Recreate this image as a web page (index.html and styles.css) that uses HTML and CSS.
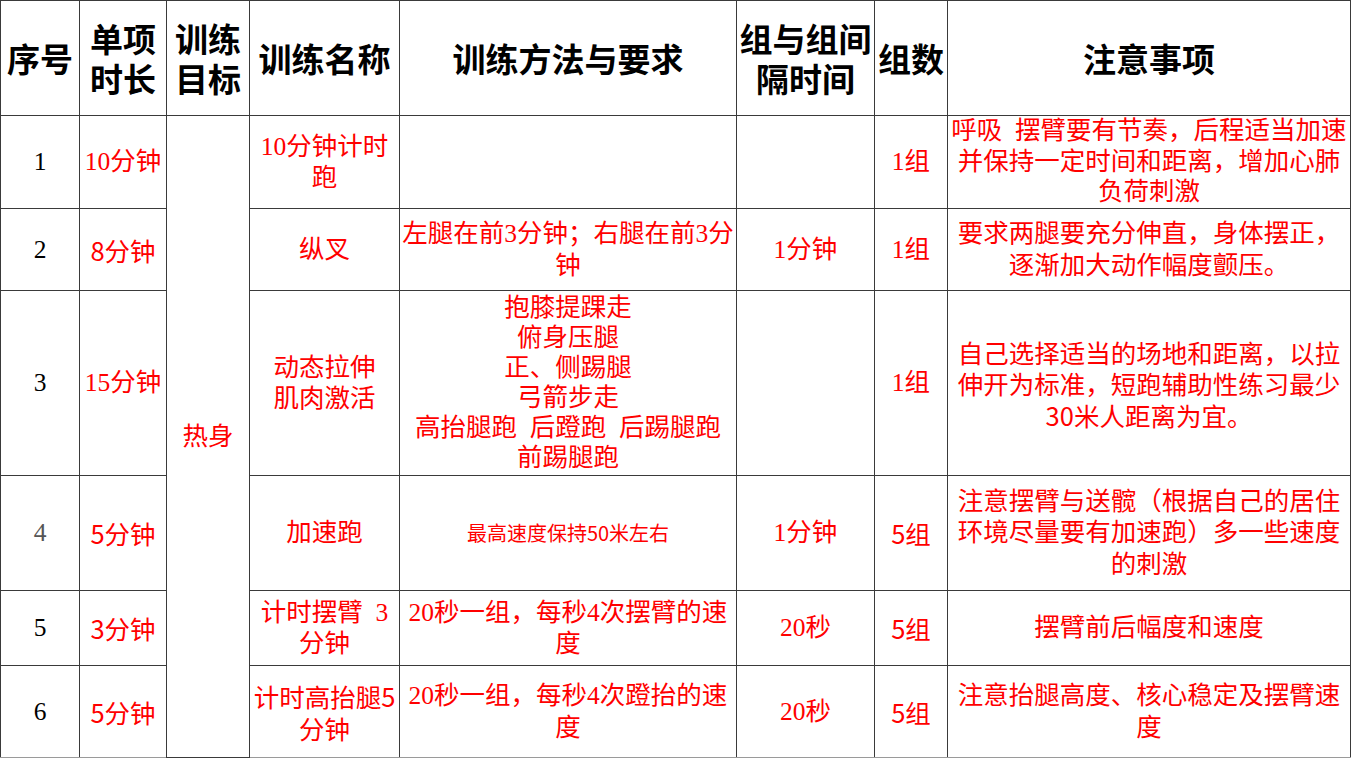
FILE: index.html
```html
<!DOCTYPE html>
<html lang="zh-CN">
<head>
<meta charset="utf-8">
<title>热身训练计划</title>
<link rel="stylesheet" href="styles.css">
</head>
<body>
<table class="plan">
  <colgroup>
    <col class="c-no">
    <col class="c-dur">
    <col class="c-goal">
    <col class="c-name">
    <col class="c-method">
    <col class="c-rest">
    <col class="c-sets">
    <col class="c-note">
  </colgroup>
  <thead>
    <tr class="r-head">
      <th>序号</th>
      <th><span class="ln">单项</span><span class="ln">时长</span></th>
      <th><span class="ln">训练</span><span class="ln">目标</span></th>
      <th>训练名称</th>
      <th>训练方法与要求</th>
      <th><span class="ln">组与组间</span><span class="ln">隔时间</span></th>
      <th>组数</th>
      <th>注意事项</th>
    </tr>
  </thead>
  <tbody>
    <tr class="r1">
      <td class="no">1</td>
      <td>10分钟</td>
      <td class="goal" rowspan="6">热身</td>
      <td>10分钟计时<br>跑</td>
      <td></td>
      <td></td>
      <td>1组</td>
      <td class="compact">呼吸&nbsp;&nbsp;摆臂要有节奏，后程适当加速<br>并保持一定时间和距离，增加心肺<br>负荷刺激</td>
    </tr>
    <tr class="r2">
      <td class="no">2</td>
      <td class="sans">8分钟</td>
      <td>纵叉</td>
      <td>左腿在前3分钟；右腿在前3分<br>钟</td>
      <td>1分钟</td>
      <td>1组</td>
      <td>要求两腿要充分伸直，身体摆正，<br>逐渐加大动作幅度颤压。</td>
    </tr>
    <tr class="r3">
      <td class="no">3</td>
      <td>15分钟</td>
      <td>动态拉伸<br>肌肉激活</td>
      <td class="dense">抱膝提踝走<br>俯身压腿<br>正、侧踢腿<br>弓箭步走<br>高抬腿跑&nbsp;&nbsp;后蹬跑&nbsp;&nbsp;后踢腿跑<br>前踢腿跑</td>
      <td></td>
      <td>1组</td>
      <td class="sans">自己选择适当的场地和距离，以拉<br>伸开为标准，短跑辅助性练习最少<br>30米人距离为宜。</td>
    </tr>
    <tr class="r4">
      <td class="no light">4</td>
      <td class="sans">5分钟</td>
      <td>加速跑</td>
      <td class="small sans">最高速度保持50米左右</td>
      <td>1分钟</td>
      <td class="sans">5组</td>
      <td>注意摆臂与送髋（根据自己的居住<br>环境尽量要有加速跑）多一些速度<br>的刺激</td>
    </tr>
    <tr class="r5">
      <td class="no">5</td>
      <td class="sans">3分钟</td>
      <td>计时摆臂&nbsp;&nbsp;3<br>分钟</td>
      <td>20秒一组，每秒4次摆臂的速<br>度</td>
      <td>20秒</td>
      <td class="sans">5组</td>
      <td>摆臂前后幅度和速度</td>
    </tr>
    <tr class="r6">
      <td class="no">6</td>
      <td class="sans">5分钟</td>
      <td class="sans">计时高抬腿5<br>分钟</td>
      <td>20秒一组，每秒4次蹬抬的速<br>度</td>
      <td>20秒</td>
      <td class="sans">5组</td>
      <td>注意抬腿高度、核心稳定及摆臂速<br>度</td>
    </tr>
  </tbody>
</table>
</body>
</html>
```
FILE: styles.css
```css
html, body {
  margin: 0;
  padding: 0;
  background: #ffffff;
}

.plan {
  border-collapse: collapse;
  table-layout: fixed;
  width: 1350px;
  font-family: "Liberation Serif", "Noto Sans CJK SC", serif;
}

.c-no { width: 79px; }
.c-dur { width: 87px; }
.c-goal { width: 83px; }
.c-name { width: 150px; }
.c-method { width: 337px; }
.c-rest { width: 138px; }
.c-sets { width: 73px; }
.c-note { width: 403px; }

.plan th,
.plan td {
  border: 1px solid #3a3a3a;
  padding: 0;
  text-align: center;
  vertical-align: middle;
  white-space: nowrap;
  overflow: visible;
}

.plan th {
  font-family: "Noto Sans CJK SC", sans-serif;
  font-weight: 700;
  font-size: 33px;
  line-height: 40px;
  color: #000000;
}

.plan th .ln {
  display: block;
  height: 40px;
}

.plan td {
  font-size: 25.5px;
  line-height: 31.5px;
  color: #ff0000;
}

.plan td.no {
  color: #000000;
  font-family: "Liberation Serif", serif;
}

.plan td.light {
  color: #555555;
}

.plan td.sans {
  font-family: "Noto Sans CJK SC", sans-serif;
}

.plan td.small {
  font-size: 20px;
}

.plan td.dense {
  line-height: 30px;
}

.plan td.compact {
  line-height: 30.5px;
}

.plan tbody tr:last-child td {
  border-bottom-color: #9a9a9a;
}

.r-head { height: 115px; }
.r1 { height: 93px; }
.r2 { height: 82px; }
.r3 { height: 185px; }
.r4 { height: 115px; }
.r5 { height: 75px; }
.r6 { height: 92px; }
```
